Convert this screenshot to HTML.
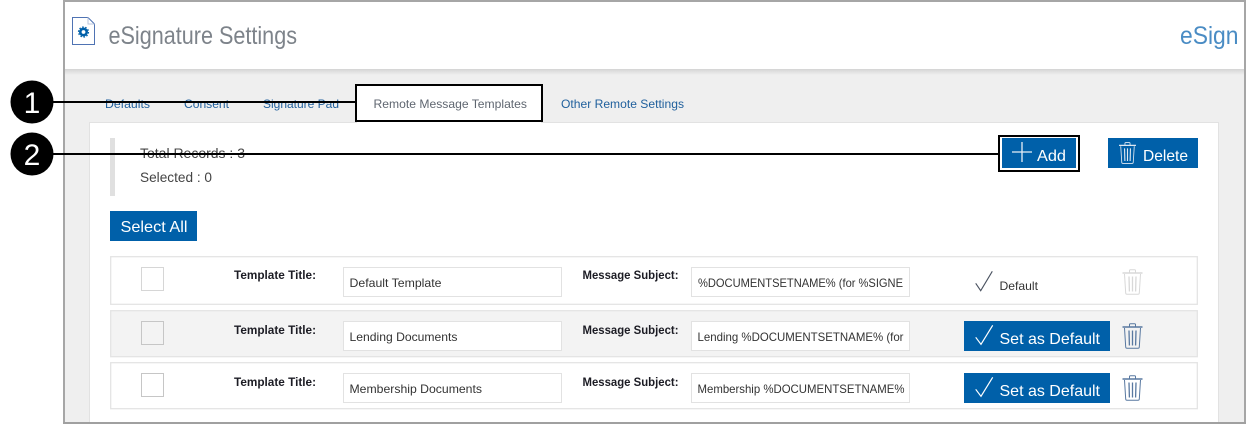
<!DOCTYPE html>
<html><head><meta charset="utf-8"><style>
html,body{margin:0;padding:0;background:#fff;width:1246px;height:424px;overflow:hidden}
svg{display:block}
text{font-family:"Liberation Sans",sans-serif}
.t{font-size:12px;fill:#333}
.b{font-size:12px;font-weight:bold;fill:#1c1c24}
.tab{font-size:12px;fill:#1f5f9c}
.w{font-size:16px;fill:#fff}
</style></head><body>
<svg width="1246" height="424" viewBox="0 0 1246 424" xmlns="http://www.w3.org/2000/svg">
<defs>
<linearGradient id="sh" x1="0" y1="0" x2="0" y2="1"><stop offset="0" stop-color="#d4d4d4"/><stop offset="1" stop-color="#efefef"/></linearGradient>
<symbol id="trash" viewBox="0 0 21 26" overflow="visible"><g fill="none" stroke="currentColor" stroke-width="1"><path d="M7.500 3.500V1.500Q7.500 .7 8.500 .7H12.500Q13.500 .7 13.500 1.500V3.500"/><path d="M.5 4H20.5" stroke-width="1.400"/><path d="M2.500 5L3.700 24Q3.800 25.300 5 25.300H16Q17.200 25.300 17.300 24L18.500 5"/><path d="M7 7.500L7.400 22.500M10.500 7.500V22.500M14 7.500L13.600 22.500" stroke-width="1.300"/></g></symbol>
</defs>
<rect x="63" y="0" width="1183" height="424" fill="#a6a6a6"/>
<rect x="65" y="2" width="1179" height="420" fill="#efefef"/>
<rect x="65" y="69" width="1179" height="6" fill="url(#sh)"/>
<rect x="65" y="2" width="1179" height="67" fill="#fff"/>
<path d="M72.500 17.500H88L94.500 24V44.500H72.500Z" fill="#fff" stroke="#4f73b3"/>
<path d="M88 17.500V24H94.500" fill="none" stroke="#b9c6dc"/>
<circle cx="83.500" cy="32" r="3.200" fill="none" stroke="#0060a9" stroke-width="2.600"/>
<circle cx="83.500" cy="32" r="5" fill="none" stroke="#0060a9" stroke-width="1.200" stroke-dasharray="1.600 1.540"/>
<text x="108.500" y="44" font-size="25" fill="#7d838a" textLength="188.500" lengthAdjust="spacingAndGlyphs">eSignature Settings</text>
<text x="1180" y="44" font-size="25" fill="#4a8cc4" textLength="58.500" lengthAdjust="spacingAndGlyphs">eSign</text>

<rect x="89.500" y="122.500" width="1129" height="310" fill="#fff" stroke="#e2e2e2"/>

<text class="tab" x="105" y="108" textLength="45" lengthAdjust="spacingAndGlyphs">Defaults</text>
<text class="tab" x="184" y="108" textLength="45" lengthAdjust="spacingAndGlyphs">Consent</text>
<text class="tab" x="263" y="108" textLength="76" lengthAdjust="spacingAndGlyphs">Signature Pad</text>
<text class="tab" x="561" y="108" textLength="123" lengthAdjust="spacingAndGlyphs">Other Remote Settings</text>
<rect x="356" y="85" width="186" height="36" fill="#fff"/>
<rect x="357" y="121" width="184" height="3" fill="#fff"/>
<text class="t" x="373.500" y="108" style="fill:#5f6670" textLength="153.500" lengthAdjust="spacingAndGlyphs">Remote Message Templates</text>

<rect x="110" y="138" width="5" height="58" fill="#e0e0e0"/>
<text x="140" y="158" font-size="14" fill="#444" textLength="105" lengthAdjust="spacingAndGlyphs">Total Records : 3</text>
<text x="140" y="182" font-size="14" fill="#444" textLength="72" lengthAdjust="spacingAndGlyphs">Selected : 0</text>

<rect x="110" y="211" width="87" height="30" fill="#0060a9"/>
<text class="w" x="120.500" y="232" textLength="67" lengthAdjust="spacingAndGlyphs">Select All</text>

<rect x="1108" y="138" width="90" height="30" fill="#0060a9"/>
<use href="#trash" x="1118" y="142" width="19" height="22" color="#dfe8f2"/>
<text class="w" x="1143" y="161" textLength="45" lengthAdjust="spacingAndGlyphs">Delete</text>

<!-- row 1 -->
<rect x="110.700" y="256.700" width="1086.600" height="47.600" fill="#fff" stroke="#e4e4e4" stroke-width="1.300"/>
<rect x="141.500" y="267.500" width="22" height="23" fill="#fff" stroke="#d6d6d6"/>
<text class="b" x="234" y="279" textLength="82" lengthAdjust="spacingAndGlyphs">Template Title:</text>
<rect x="343.500" y="267.500" width="218" height="29" fill="#fff" stroke="#e2e2e2"/>
<text class="t" x="349.500" y="287" textLength="92" lengthAdjust="spacingAndGlyphs">Default Template</text>
<text class="b" x="582.500" y="279" textLength="96" lengthAdjust="spacingAndGlyphs">Message Subject:</text>
<rect x="691.500" y="267.500" width="218" height="29" fill="#fff" stroke="#e2e2e2"/>
<text class="t" x="698" y="287" textLength="205" lengthAdjust="spacingAndGlyphs">%DOCUMENTSETNAME% (for %SIGNE</text>
<path d="M975.700 283.300L980.700 290.700L992.300 271.300" fill="none" stroke="#4a5260" stroke-width="1.100"/>
<text class="t" x="999.500" y="290" textLength="38.500" lengthAdjust="spacingAndGlyphs">Default</text>
<use href="#trash" x="1122" y="269" width="21" height="26" color="#d8d8d8"/>

<!-- row 2 -->
<rect x="110.700" y="310.700" width="1086.600" height="46" fill="#f3f3f3" stroke="#e4e4e4" stroke-width="1.300"/>
<rect x="141.500" y="321.500" width="22" height="23" fill="#f3f3f3" stroke="#c6c6c6"/>
<text class="b" x="234" y="334" textLength="82" lengthAdjust="spacingAndGlyphs">Template Title:</text>
<rect x="343.500" y="321.500" width="218" height="29" fill="#fff" stroke="#e2e2e2"/>
<text class="t" x="349.500" y="341" textLength="108" lengthAdjust="spacingAndGlyphs">Lending Documents</text>
<text class="b" x="582.500" y="334" textLength="96" lengthAdjust="spacingAndGlyphs">Message Subject:</text>
<rect x="691.500" y="321.500" width="218" height="29" fill="#fff" stroke="#e2e2e2"/>
<text class="t" x="697.500" y="341" textLength="206" lengthAdjust="spacingAndGlyphs">Lending %DOCUMENTSETNAME% (for</text>
<rect x="964" y="321" width="146" height="30" fill="#0060a9"/>
<path d="M975.700 337.300L981 344.300L992.700 325.300" fill="none" stroke="#fff" stroke-width="1.200"/>
<text class="w" x="999.500" y="344" textLength="100.500" lengthAdjust="spacingAndGlyphs">Set as Default</text>
<use href="#trash" x="1122" y="323" width="21" height="26" color="#5878a0"/>

<!-- row 3 -->
<rect x="110.700" y="362.700" width="1086.600" height="46" fill="#fff" stroke="#e4e4e4" stroke-width="1.300"/>
<rect x="141.500" y="373.500" width="22" height="23" fill="#fff" stroke="#c6c6c6"/>
<text class="b" x="234" y="386" textLength="82" lengthAdjust="spacingAndGlyphs">Template Title:</text>
<rect x="343.500" y="373.500" width="218" height="29" fill="#fff" stroke="#e2e2e2"/>
<text class="t" x="349.500" y="393" textLength="132.500" lengthAdjust="spacingAndGlyphs">Membership Documents</text>
<text class="b" x="582.500" y="386" textLength="96" lengthAdjust="spacingAndGlyphs">Message Subject:</text>
<rect x="691.500" y="373.500" width="218" height="29" fill="#fff" stroke="#e2e2e2"/>
<text class="t" x="697.500" y="393" textLength="207" lengthAdjust="spacingAndGlyphs">Membership %DOCUMENTSETNAME%</text>
<rect x="964" y="373" width="146" height="30" fill="#0060a9"/>
<path d="M975.700 389.300L981 396.300L992.700 377.300" fill="none" stroke="#fff" stroke-width="1.200"/>
<text class="w" x="999.500" y="396" textLength="100.500" lengthAdjust="spacingAndGlyphs">Set as Default</text>
<use href="#trash" x="1122" y="375" width="21" height="26" color="#5878a0"/>

<!-- edges -->
<rect x="63" y="422" width="1183" height="2" fill="#a0a0a0"/>
<rect x="1219" y="123" width="25" height="299" fill="#efefef"/>

<!-- callouts -->
<rect x="356" y="85" width="186" height="36" fill="none" stroke="#000" stroke-width="2"/>
<rect x="999" y="136" width="80" height="35" fill="#fff" stroke="#000" stroke-width="2"/>
<rect x="1002" y="138" width="74" height="30" fill="#0060a9"/>
<path d="M1022 142V162M1012 152H1032" stroke="#e6eef6" stroke-width="1.300" fill="none"/>
<text class="w" x="1037" y="161" textLength="29" lengthAdjust="spacingAndGlyphs">Add</text>
<path d="M53 102H356M53 154H999" stroke="#000" stroke-width="2" fill="none"/>
<circle cx="32" cy="102" r="21.500" fill="#000"/>
<circle cx="32" cy="154" r="21.500" fill="#000"/>
<text x="32" y="113" font-size="30" fill="#fff" text-anchor="middle">1</text>
<text x="32" y="165" font-size="30" fill="#fff" text-anchor="middle">2</text>
</svg>
</body></html>
